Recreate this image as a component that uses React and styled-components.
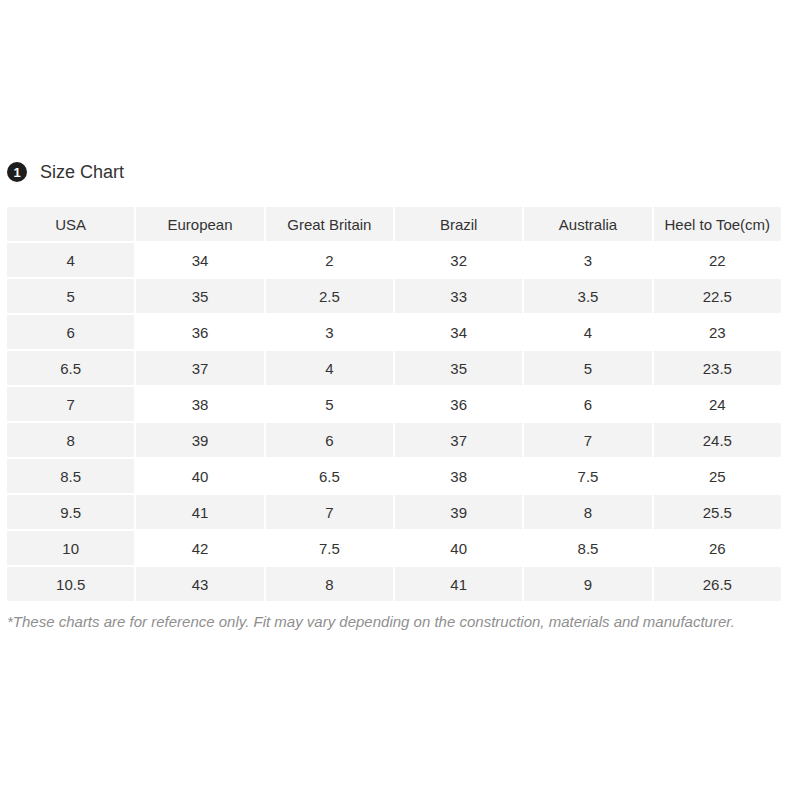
import React from "react";
import styled, { createGlobalStyle } from "styled-components";

const Global = createGlobalStyle`
  html, body { margin: 0; padding: 0; background: #fff; }
  body { font-family: "Liberation Sans", Arial, sans-serif; }
`;

const Page = styled.div`
  width: 800px;
  height: 800px;
  box-sizing: border-box;
  padding: 160px 17px 0 5px;
  display: flex;
  flex-direction: column;
`;

const Title = styled.div`
  display: flex;
  align-items: center;
  gap: 13px;
  height: 24px;
  padding-left: 2px;
  font-size: 18px;
  color: #333;
`;

const Badge = styled.span`
  width: 20px;
  height: 20px;
  border-radius: 50%;
  background: #1e1e1e;
  color: #fff;
  font-size: 13px;
  font-weight: bold;
  display: flex;
  align-items: center;
  justify-content: center;
`;

const Table = styled.table`
  margin-top: 21px;
  width: 778px;
  border-collapse: separate;
  border-spacing: 2px;
  table-layout: fixed;
`;

const Cell = styled.td`
  height: 34px;
  padding: 0;
  text-align: center;
  vertical-align: middle;
  font-size: 15px;
  font-weight: normal;
  color: #333;
  background: ${(p) => (p.$shaded ? "#f3f3f3" : "#fff")};
`;

const Note = styled.p`
  margin: 11px 0 0 2px;
  font-size: 15px;
  font-style: italic;
  color: #8f8f8f;
  line-height: 16px;
  white-space: nowrap;
`;

const headers = ["USA", "European", "Great Britain", "Brazil", "Australia", "Heel to Toe(cm)"];
const rows = [
  ["4", "34", "2", "32", "3", "22"],
  ["5", "35", "2.5", "33", "3.5", "22.5"],
  ["6", "36", "3", "34", "4", "23"],
  ["6.5", "37", "4", "35", "5", "23.5"],
  ["7", "38", "5", "36", "6", "24"],
  ["8", "39", "6", "37", "7", "24.5"],
  ["8.5", "40", "6.5", "38", "7.5", "25"],
  ["9.5", "41", "7", "39", "8", "25.5"],
  ["10", "42", "7.5", "40", "8.5", "26"],
  ["10.5", "43", "8", "41", "9", "26.5"],
];

export default function App() {
  return (
    <>
      <Global />
      <Page>
        <Title>
          <Badge>1</Badge>
          <span>Size Chart</span>
        </Title>
        <Table>
          <thead>
            <tr>
              {headers.map((h) => (
                <Cell as="th" key={h} $shaded>
                  {h}
                </Cell>
              ))}
            </tr>
          </thead>
          <tbody>
            {rows.map((r, i) => (
              <tr key={i}>
                {r.map((v, j) => (
                  <Cell key={j} $shaded={j === 0 || i % 2 === 1}>
                    {v}
                  </Cell>
                ))}
              </tr>
            ))}
          </tbody>
        </Table>
        <Note>
          *These charts are for reference only. Fit may vary depending on the construction, materials and manufacturer.
        </Note>
      </Page>
    </>
  );
}
